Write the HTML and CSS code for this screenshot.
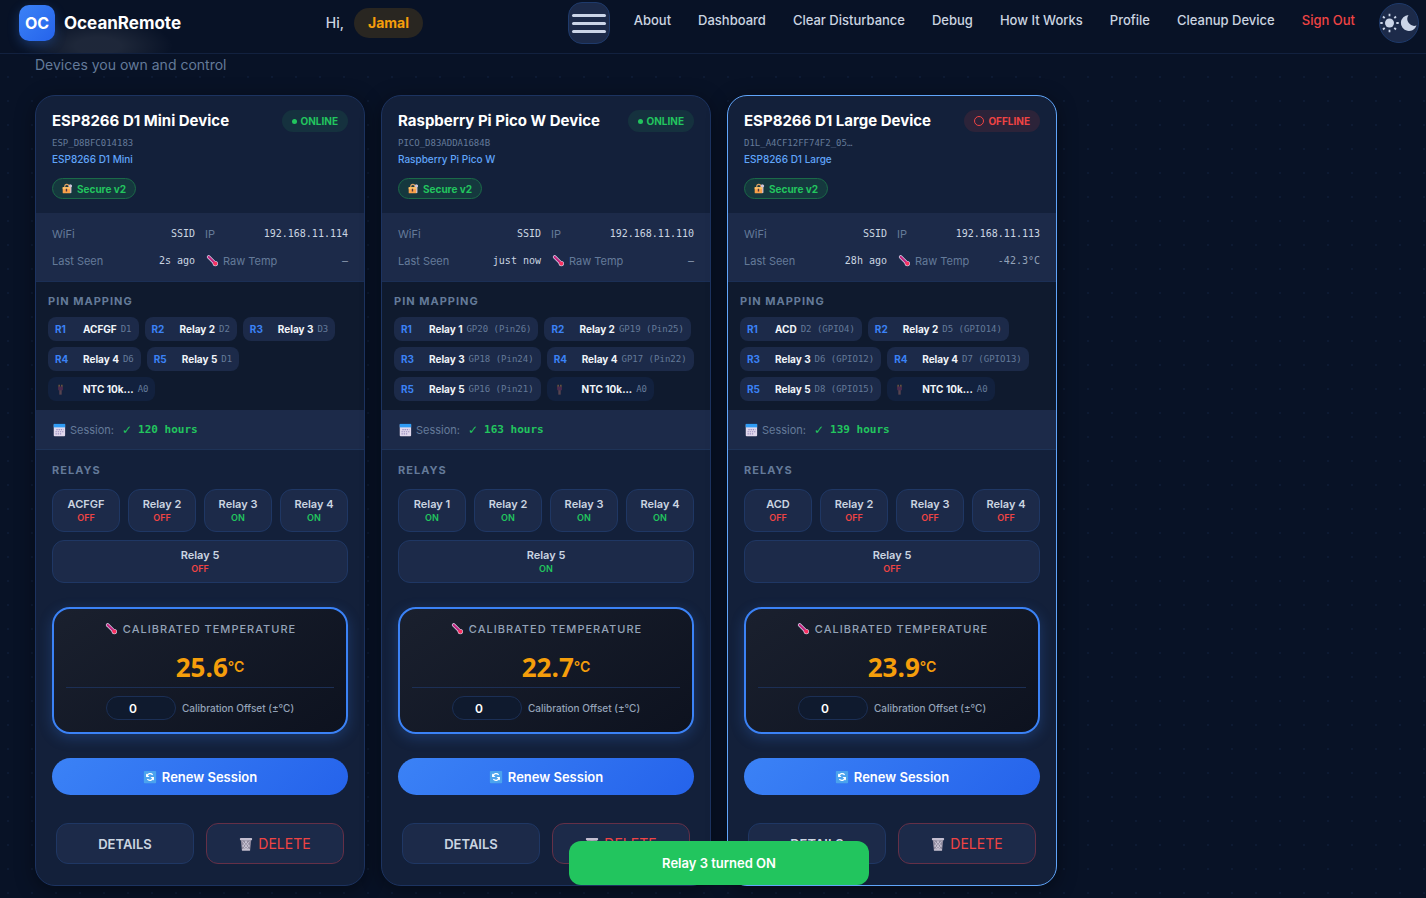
FILE: index.html
```html
<!DOCTYPE html>
<html lang="en">
<head>
    <meta charset="UTF-8">
    <meta name="viewport" content="width=device-width, initial-scale=1.0">
    <title>OceanRemote - Dashboard</title>
    <link rel="stylesheet" href="styles.css">
</head>
<body>
    <!-- shared icons -->
    <svg class="sprite" width="0" height="0" aria-hidden="true">
        <symbol id="i-lock" viewBox="0 0 16 16">
            <path d="M4 7V5a3 3 0 0 1 6 0v2" fill="none" stroke="#d9a066" stroke-width="1.6"/>
            <path d="M12.5 2a2.3 2.3 0 0 1 1.2 4.2V14l-1.4 1-1.3-1V6.200A2.300 2.300 0 0 1 12.500 2z" fill="#cfc6dc"/>
            <rect x="1" y="6" width="11" height="9" rx="1" fill="#f9a14a"/>
            <rect x="1" y="6" width="11" height="3" fill="#fdc36a"/>
            <path d="M6.500 8.500v4" stroke="#4a3340" stroke-width="2"/>
        </symbol>
        <symbol id="i-thermo" viewBox="-2 -1 19 19">
            <path d="M3 3l8.500 8.500" stroke="#d8d3ea" stroke-width="5" stroke-linecap="round"/>
            <circle cx="12" cy="12" r="3.600" fill="#d8d3ea"/>
            <path d="M3 3l9 9" stroke="#c2267e" stroke-width="3" stroke-linecap="round"/>
            <circle cx="12" cy="12" r="2.800" fill="#f8315f"/>
        </symbol>
        <symbol id="i-sensor" viewBox="0 0 16 16">
            <path d="M6 1v4M10 1v4" stroke="#8b6a3e" stroke-width="1.600"/>
            <rect x="4.500" y="3.500" width="7" height="6" rx="1.500" fill="#4a2a4c"/>
            <path d="M8 9v6.500" stroke="#57444f" stroke-width="3.500"/>
        </symbol>
        <symbol id="i-calendar" viewBox="-1 0 16 16">
            <rect x="1" y="1" width="13" height="14" rx="1" fill="#e1d8ec"/>
            <path d="M1 1h13v4H1z" fill="#2f9bf4"/>
            <path d="M4 7.500h8M3 10h9M3 12.500h7" stroke="#9b8fc0" stroke-width="1.300" stroke-dasharray="1.500 1"/>
        </symbol>
        <symbol id="i-renew" viewBox="0 0 16 16">
            <rect x="1" y="1" width="14" height="14" rx="1" fill="#4ba3ee"/>
            <path d="M4.500 7a3.700 3.700 0 0 1 6.500-1.500M11.500 9A3.700 3.700 0 0 1 5 10.500" fill="none" stroke="#fff" stroke-width="1.500"/>
            <path d="M3.500 4v4h4zM12.500 12V8h-4z" fill="#fff"/>
        </symbol>
        <symbol id="i-trash" viewBox="0 0 16 16">
            <path d="M2 3h12l-1.300 12.500H3.300z" fill="#8f8a9e"/>
            <path d="M4 5l7 9M7 4l5 7M4 9l4 5M12 5l-7 9M9 4L4 11M12 9l-4 5" stroke="#d5d0df" stroke-width=".9"/>
            <rect x="1" y="1" width="14" height="2.600" rx="1" fill="#c4bed0"/>
            <path d="M3.500 14.800h9" stroke="#d5d0df" stroke-width="1.400"/>
        </symbol>
    </svg>

    <header class="topbar">
        <a class="brand" href="#"><span class="logo">OC</span>OceanRemote</a>
        <div class="greeting">Hi, <span class="user">Jamal</span></div>
        <div class="menu">
            <button class="burger" type="button" aria-label="Menu"><span></span><span></span><span></span></button>
            <nav>
                <a href="#">About</a>
                <a href="#">Dashboard</a>
                <a href="#">Clear Disturbance</a>
                <a href="#">Debug</a>
                <a href="#">How It Works</a>
                <a href="#">Profile</a>
                <a href="#">Cleanup Device</a>
                <a class="signout" href="#">Sign Out</a>
            </nav>
            <button class="theme" type="button" aria-label="Toggle theme">
                <svg width="38" height="20" viewBox="0 0 38 20">
                    <circle cx="9.500" cy="10" r="4.500" fill="#cbd5e8"/>
                    <path d="M9.500 0.800v2.400M9.500 16.800v2.400M0.300 10h2.400M16.300 10h2.400M3 3.500l1.700 1.700M14.300 14.800l1.700 1.700M3 16.500l1.700-1.700M14.300 5.200L16 3.500" stroke="#cbd5e8" stroke-width="1.800"/>
                    <path d="M28.500 2a8 8 0 1 0 8 10.500A7 7 0 0 1 28.500 2z" fill="#cbd5e8"/>
                </svg>
            </button>
        </div>
    </header>

    <main>
        <p class="subtitle">Devices you own and control</p>

        <div class="devices">
            <article class="card">
                <div class="card-head">
                    <div class="title-row"><h2>ESP8266 D1 Mini Device</h2><span class="status online">ONLINE</span></div>
                    <div class="device-id">ESP_D8BFC014183</div>
                    <div class="device-type">ESP8266 D1 Mini</div>
                    <span class="secure"><svg class="icon-sm"><use href="#i-lock"/></svg>Secure v2</span>
                </div>
                <dl class="info">
                    <div><dt>WiFi</dt><dd>SSID</dd></div>
                    <div><dt>IP</dt><dd>192.168.11.114</dd></div>
                    <div><dt>Last Seen</dt><dd>2s ago</dd></div>
                    <div><dt><svg class="icon"><use href="#i-thermo"/></svg>Raw Temp</dt><dd class="raw">—</dd></div>
                </dl>
                <section class="pins">
                    <h3>Pin Mapping</h3>
                    <ul>
                        <li><b>R1</b><strong>ACFGF</strong><code>D1</code></li>
                        <li><b>R2</b><strong>Relay 2</strong><code>D2</code></li>
                        <li><b>R3</b><strong>Relay 3</strong><code>D3</code></li>
                        <li><b>R4</b><strong>Relay 4</strong><code>D6</code></li>
                        <li><b>R5</b><strong>Relay 5</strong><code>D1</code></li>
                        <li class="sensor"><b><svg class="icon-sm"><use href="#i-sensor"/></svg></b><strong>NTC 10k...</strong><code>A0</code></li>
                    </ul>
                </section>
                <div class="session"><svg class="icon"><use href="#i-calendar"/></svg>Session: <span><i>✓</i>120 hours</span></div>
                <section class="controls">
                    <h3>Relays</h3>
                    <div class="relays">
                        <button type="button">ACFGF<span class="off">OFF</span></button>
                        <button type="button">Relay 2<span class="off">OFF</span></button>
                        <button type="button">Relay 3<span class="on">ON</span></button>
                        <button type="button">Relay 4<span class="on">ON</span></button>
                        <button type="button">Relay 5<span class="off">OFF</span></button>
                    </div>
                    <div class="temp">
                        <h4><svg class="icon"><use href="#i-thermo"/></svg>Calibrated Temperature</h4>
                        <div class="value">25.6<span>°C</span></div>
                        <div class="offset">
                            <input type="text" id="offset1" value="0">
                            <label for="offset1">Calibration Offset (±°C)</label>
                        </div>
                    </div>
                    <button class="renew" type="button"><svg class="icon"><use href="#i-renew"/></svg>Renew Session</button>
                    <div class="actions">
                        <button type="button">DETAILS</button>
                        <button class="delete" type="button"><svg class="icon"><use href="#i-trash"/></svg>DELETE</button>
                    </div>
                </section>
            </article>

            <article class="card">
                <div class="card-head">
                    <div class="title-row"><h2>Raspberry Pi Pico W Device</h2><span class="status online">ONLINE</span></div>
                    <div class="device-id">PICO_D83ADDA1684B</div>
                    <div class="device-type">Raspberry Pi Pico W</div>
                    <span class="secure"><svg class="icon-sm"><use href="#i-lock"/></svg>Secure v2</span>
                </div>
                <dl class="info">
                    <div><dt>WiFi</dt><dd>SSID</dd></div>
                    <div><dt>IP</dt><dd>192.168.11.110</dd></div>
                    <div><dt>Last Seen</dt><dd>just now</dd></div>
                    <div><dt><svg class="icon"><use href="#i-thermo"/></svg>Raw Temp</dt><dd class="raw">—</dd></div>
                </dl>
                <section class="pins">
                    <h3>Pin Mapping</h3>
                    <ul>
                        <li><b>R1</b><strong>Relay 1</strong><code>GP20 (Pin26)</code></li>
                        <li><b>R2</b><strong>Relay 2</strong><code>GP19 (Pin25)</code></li>
                        <li><b>R3</b><strong>Relay 3</strong><code>GP18 (Pin24)</code></li>
                        <li><b>R4</b><strong>Relay 4</strong><code>GP17 (Pin22)</code></li>
                        <li><b>R5</b><strong>Relay 5</strong><code>GP16 (Pin21)</code></li>
                        <li class="sensor"><b><svg class="icon-sm"><use href="#i-sensor"/></svg></b><strong>NTC 10k...</strong><code>A0</code></li>
                    </ul>
                </section>
                <div class="session"><svg class="icon"><use href="#i-calendar"/></svg>Session: <span><i>✓</i>163 hours</span></div>
                <section class="controls">
                    <h3>Relays</h3>
                    <div class="relays">
                        <button type="button">Relay 1<span class="on">ON</span></button>
                        <button type="button">Relay 2<span class="on">ON</span></button>
                        <button type="button">Relay 3<span class="on">ON</span></button>
                        <button type="button">Relay 4<span class="on">ON</span></button>
                        <button type="button">Relay 5<span class="on">ON</span></button>
                    </div>
                    <div class="temp">
                        <h4><svg class="icon"><use href="#i-thermo"/></svg>Calibrated Temperature</h4>
                        <div class="value">22.7<span>°C</span></div>
                        <div class="offset">
                            <input type="text" id="offset2" value="0">
                            <label for="offset2">Calibration Offset (±°C)</label>
                        </div>
                    </div>
                    <button class="renew" type="button"><svg class="icon"><use href="#i-renew"/></svg>Renew Session</button>
                    <div class="actions">
                        <button type="button">DETAILS</button>
                        <button class="delete" type="button"><svg class="icon"><use href="#i-trash"/></svg>DELETE</button>
                    </div>
                </section>
            </article>

            <article class="card active">
                <div class="card-head">
                    <div class="title-row"><h2>ESP8266 D1 Large Device</h2><span class="status offline">OFFLINE</span></div>
                    <div class="device-id">D1L_A4CF12FF74F2_05…</div>
                    <div class="device-type">ESP8266 D1 Large</div>
                    <span class="secure"><svg class="icon-sm"><use href="#i-lock"/></svg>Secure v2</span>
                </div>
                <dl class="info">
                    <div><dt>WiFi</dt><dd>SSID</dd></div>
                    <div><dt>IP</dt><dd>192.168.11.113</dd></div>
                    <div><dt>Last Seen</dt><dd>28h ago</dd></div>
                    <div><dt><svg class="icon"><use href="#i-thermo"/></svg>Raw Temp</dt><dd class="raw">-42.3°C</dd></div>
                </dl>
                <section class="pins">
                    <h3>Pin Mapping</h3>
                    <ul>
                        <li><b>R1</b><strong>ACD</strong><code>D2 (GPIO4)</code></li>
                        <li><b>R2</b><strong>Relay 2</strong><code>D5 (GPIO14)</code></li>
                        <li><b>R3</b><strong>Relay 3</strong><code>D6 (GPIO12)</code></li>
                        <li><b>R4</b><strong>Relay 4</strong><code>D7 (GPIO13)</code></li>
                        <li><b>R5</b><strong>Relay 5</strong><code>D8 (GPIO15)</code></li>
                        <li class="sensor"><b><svg class="icon-sm"><use href="#i-sensor"/></svg></b><strong>NTC 10k...</strong><code>A0</code></li>
                    </ul>
                </section>
                <div class="session"><svg class="icon"><use href="#i-calendar"/></svg>Session: <span><i>✓</i>139 hours</span></div>
                <section class="controls">
                    <h3>Relays</h3>
                    <div class="relays">
                        <button type="button">ACD<span class="off">OFF</span></button>
                        <button type="button">Relay 2<span class="off">OFF</span></button>
                        <button type="button">Relay 3<span class="off">OFF</span></button>
                        <button type="button">Relay 4<span class="off">OFF</span></button>
                        <button type="button">Relay 5<span class="off">OFF</span></button>
                    </div>
                    <div class="temp">
                        <h4><svg class="icon"><use href="#i-thermo"/></svg>Calibrated Temperature</h4>
                        <div class="value">23.9<span>°C</span></div>
                        <div class="offset">
                            <input type="text" id="offset3" value="0">
                            <label for="offset3">Calibration Offset (±°C)</label>
                        </div>
                    </div>
                    <button class="renew" type="button"><svg class="icon"><use href="#i-renew"/></svg>Renew Session</button>
                    <div class="actions">
                        <button type="button">DETAILS</button>
                        <button class="delete" type="button"><svg class="icon"><use href="#i-trash"/></svg>DELETE</button>
                    </div>
                </section>
            </article>
        </div>
    </main>

    <div class="toast" role="status">Relay 3 turned ON</div>
</body>
</html>
```

FILE: styles.css
```css
* {
    box-sizing: border-box;
}
body {
    font-family: Inter, "Liberation Sans", sans-serif;
    font-size: 11px;
    line-height: 16px;
    color: #cbd5e1;
    background-color: #081226;
    background-image: radial-gradient(circle, #0d1a33 1px, transparent 1px);
    background-size: 24px 24px;
    background-position: -4px -7px;
    margin: 0;
}
h2, h3, h4, p, ul, dl, dd {
    margin: 0;
    padding: 0;
}
a {
    text-decoration: none;
    color: inherit;
}
button, input {
    font-family: inherit;
    color: inherit;
}
button {
    cursor: pointer;
}
.sprite {
    position: absolute;
}
.icon {
    width: 14px;
    height: 14px;
    flex: none;
}
.icon-sm {
    width: 11px;
    height: 11px;
    flex: none;
}

/* top bar */
.topbar {
    position: sticky;
    top: 0;
    z-index: 10;
    display: flex;
    justify-content: space-between;
    align-items: center;
    padding: 2px 7px 9px 19px;
    background-color: #081226;
    background-image: radial-gradient(ellipse 75px 28px at 98px 46px, rgba(255, 255, 255, 0.09) 30%, transparent);
    border-bottom: 1px solid #12213f;
}
.brand {
    display: flex;
    align-items: center;
    gap: 9px;
    font-size: 17px;
    font-weight: 700;
    color: #fff;
}
.logo {
    width: 36px;
    height: 36px;
    border-radius: 10px;
    background: linear-gradient(135deg, #3b82f6, #2563eb);
    box-shadow: 0 4px 12px rgba(59, 130, 246, 0.3);
    font-size: 16px;
    line-height: 36px;
    text-align: center;
}
.greeting {
    display: flex;
    align-items: center;
    gap: 10px;
    font-size: 14px;
    font-weight: 500;
}
.user {
    padding: 7px 14px;
    border-radius: 15px;
    background: #292621;
    color: #f59e0b;
    font-weight: 700;
}
.menu {
    display: flex;
    align-items: center;
    gap: 24px;
}
.burger {
    display: flex;
    flex-direction: column;
    justify-content: center;
    gap: 5px;
    width: 42px;
    height: 42px;
    padding: 0 3px;
    border: 1px solid #1e3a6b;
    border-radius: 14px;
    background: #1c2a49;
}
.burger span {
    height: 3px;
    border-radius: 2px;
    background: #cbd5e8;
}
nav {
    display: flex;
    gap: 27px;
    padding-bottom: 6px;
    font-size: 13px;
    font-weight: 500;
}
.signout {
    color: #ef4444;
}
.theme {
    display: flex;
    align-items: center;
    justify-content: center;
    width: 40px;
    height: 40px;
    padding: 0;
    border: 1px solid #1e3a6b;
    border-radius: 50%;
    background: #1c2a49;
}
.theme svg {
    flex: none;
}

/* device grid */
main {
    padding: 3px 35px 12px;
}
.subtitle {
    margin-bottom: 22px;
    font-size: 14px;
    color: #647a99;
}
.devices {
    display: grid;
    grid-template-columns: repeat(auto-fill, 330px);
    gap: 16px;
}
.card {
    border: 1px solid #1c3360;
    border-radius: 20px;
    overflow: hidden;
    background: #13203a;
    box-shadow: 0 4px 20px rgba(0, 0, 0, 0.4);
}
.card.active {
    border-color: #60a5fa;
}
.card-head {
    padding: 14px 16px;
}
.title-row {
    display: flex;
    justify-content: space-between;
    align-items: center;
    height: 22px;
}
h2 {
    font-size: 15px;
    font-weight: 700;
    color: #fff;
    white-space: nowrap;
}
.status {
    display: flex;
    align-items: center;
    gap: 4px;
    height: 22px;
    padding: 0 10px;
    border-radius: 11px;
    font-size: 10px;
    font-weight: 700;
}
.status::before {
    content: "";
    width: 5px;
    height: 5px;
    border-radius: 50%;
    background: currentColor;
}
.online {
    color: #22c55e;
    background: #15313e;
}
.offline {
    color: #ef4444;
    background: #2c2339;
}
.offline::before {
    width: 8px;
    height: 8px;
    border: 1px solid currentColor;
    background: none;
}
.device-id, dd, code, .session span {
    font-family: "DejaVu Sans Mono", "Liberation Mono", monospace;
}
.device-id {
    margin-top: 3px;
    font-size: 9px;
    color: #647a99;
}
.device-type {
    font-size: 10px;
    font-weight: 500;
    color: #60a5fa;
}
.secure {
    display: inline-flex;
    align-items: center;
    gap: 4px;
    height: 21px;
    margin-top: 11px;
    padding: 0 9px;
    border: 1px solid #1b6a48;
    border-radius: 11px;
    background: #15383e;
    color: #22c55e;
    font-size: 10px;
    font-weight: 700;
    vertical-align: top;
}
.info {
    display: grid;
    grid-template-columns: 1fr 1fr;
    gap: 11px 10px;
    padding: 13px 16px 12px;
    background: #1c2a49;
    border-bottom: 1px solid #1b2f55;
}
.info div {
    display: flex;
    justify-content: space-between;
}
dt {
    display: flex;
    align-items: center;
    gap: 4px;
    color: #647a99;
}
dd {
    font-size: 10px;
}
.raw {
    color: #94a3b8;
}

/* pin mapping */
h3 {
    font-size: 11px;
    font-weight: 700;
    letter-spacing: 1px;
    text-transform: uppercase;
    color: #647a99;
}
.pins {
    padding: 11px 12px 9px;
    background: #0f1a2e;
}
.pins ul {
    display: flex;
    flex-wrap: wrap;
    gap: 6px;
    margin-top: 8px;
    list-style: none;
}
.pins li {
    display: flex;
    align-items: center;
    gap: 4px;
    height: 24px;
    padding: 0 7px;
    border-radius: 8px;
    background: #1c2a49;
    font-size: 10px;
}
.pins b {
    display: flex;
    width: 24px;
    color: #3b82f6;
    font-weight: 700;
}
.pins strong {
    font-weight: 700;
    color: #f1f5f9;
}
.pins code {
    font-size: 9px;
    color: #647a99;
}
.pins .sensor {
    background: #12213e;
}
.session {
    display: flex;
    align-items: center;
    gap: 4px;
    padding: 12px 16px 11px;
    background: #1c2a49;
    border-bottom: 1px solid #1e3357;
    color: #647a99;
}
.session span {
    display: flex;
    gap: 6px;
    margin-left: 4px;
    color: #22c55e;
    font-weight: 700;
}
.session i {
    font-family: "DejaVu Sans", sans-serif;
    font-size: 12px;
    font-style: normal;
}

/* relays */
.controls {
    padding: 12px 16px 21px;
}
.relays {
    display: flex;
    flex-wrap: wrap;
    gap: 8px;
    margin-top: 11px;
}
.relays button {
    flex: 1 1 60px;
    height: 43px;
    padding: 0;
    border: 1px solid #1f3764;
    border-radius: 12px;
    background: #1c2a49;
    font-size: 11px;
    line-height: 14px;
    font-weight: 600;
}
.relays span {
    display: block;
    font-size: 9px;
    line-height: 13px;
}
.on {
    color: #22c55e;
}
.off {
    color: #ef4444;
}

/* temperature */
.temp {
    margin: 24px 0;
    padding: 12px;
    border: 2px solid #3b82f6;
    border-radius: 18px;
    background: linear-gradient(145deg, #1a202e, #0d121f);
    box-shadow: 0 4px 14px rgba(59, 130, 246, 0.25);
}
h4 {
    display: flex;
    align-items: center;
    justify-content: center;
    gap: 5px;
    font-size: 11px;
    font-weight: 500;
    letter-spacing: 1px;
    text-transform: uppercase;
    color: #94a3b8;
}
.value {
    display: flex;
    align-items: center;
    justify-content: center;
    margin: 12px 0 2px;
    padding-left: 20px;
    font-family: "Open Sans", "Noto Sans", sans-serif;
    font-size: 26px;
    line-height: 36px;
    font-weight: 700;
    color: #f59e0b;
}
.value span {
    font-family: Inter, sans-serif;
    font-size: 14px;
    font-weight: 600;
}
.offset {
    display: flex;
    align-items: center;
    justify-content: center;
    gap: 6px;
    padding-top: 8px;
    border-top: 1px solid #1c2f55;
    color: #94a3b8;
    font-size: 10px;
    font-weight: 500;
}
.offset input {
    width: 70px;
    height: 24px;
    padding: 0 16px 0 0;
    border: 1px solid #1b2f55;
    border-radius: 12px;
    background: #0f1a2e;
    color: #fff;
    font-size: 12px;
    font-weight: 600;
    text-align: center;
}
.renew {
    display: flex;
    align-items: center;
    justify-content: center;
    gap: 5px;
    width: 100%;
    height: 37px;
    border: none;
    border-radius: 19px;
    background: linear-gradient(135deg, #3b82f6, #2563eb);
    color: #fff;
    font-size: 13px;
    font-weight: 600;
}
.actions {
    display: flex;
    gap: 12px;
    margin-top: 28px;
    padding: 0 4px;
}
.actions button {
    display: flex;
    align-items: center;
    justify-content: center;
    gap: 5px;
    flex: 1;
    height: 41px;
    border: 1px solid #1f3764;
    border-radius: 12px;
    background: #1c2a49;
    font-size: 13px;
    font-weight: 600;
}
.actions .delete {
    border-color: #653047;
    color: #ef4444;
    font-size: 14px;
    font-weight: 400;
}

.toast {
    position: fixed;
    left: 50%;
    bottom: 13px;
    z-index: 20;
    width: 300px;
    margin-left: -144px;
    padding: 14px;
    border-radius: 12px;
    background: #22c55e;
    color: #fff;
    font-size: 13px;
    font-weight: 600;
    text-align: center;
}
```
